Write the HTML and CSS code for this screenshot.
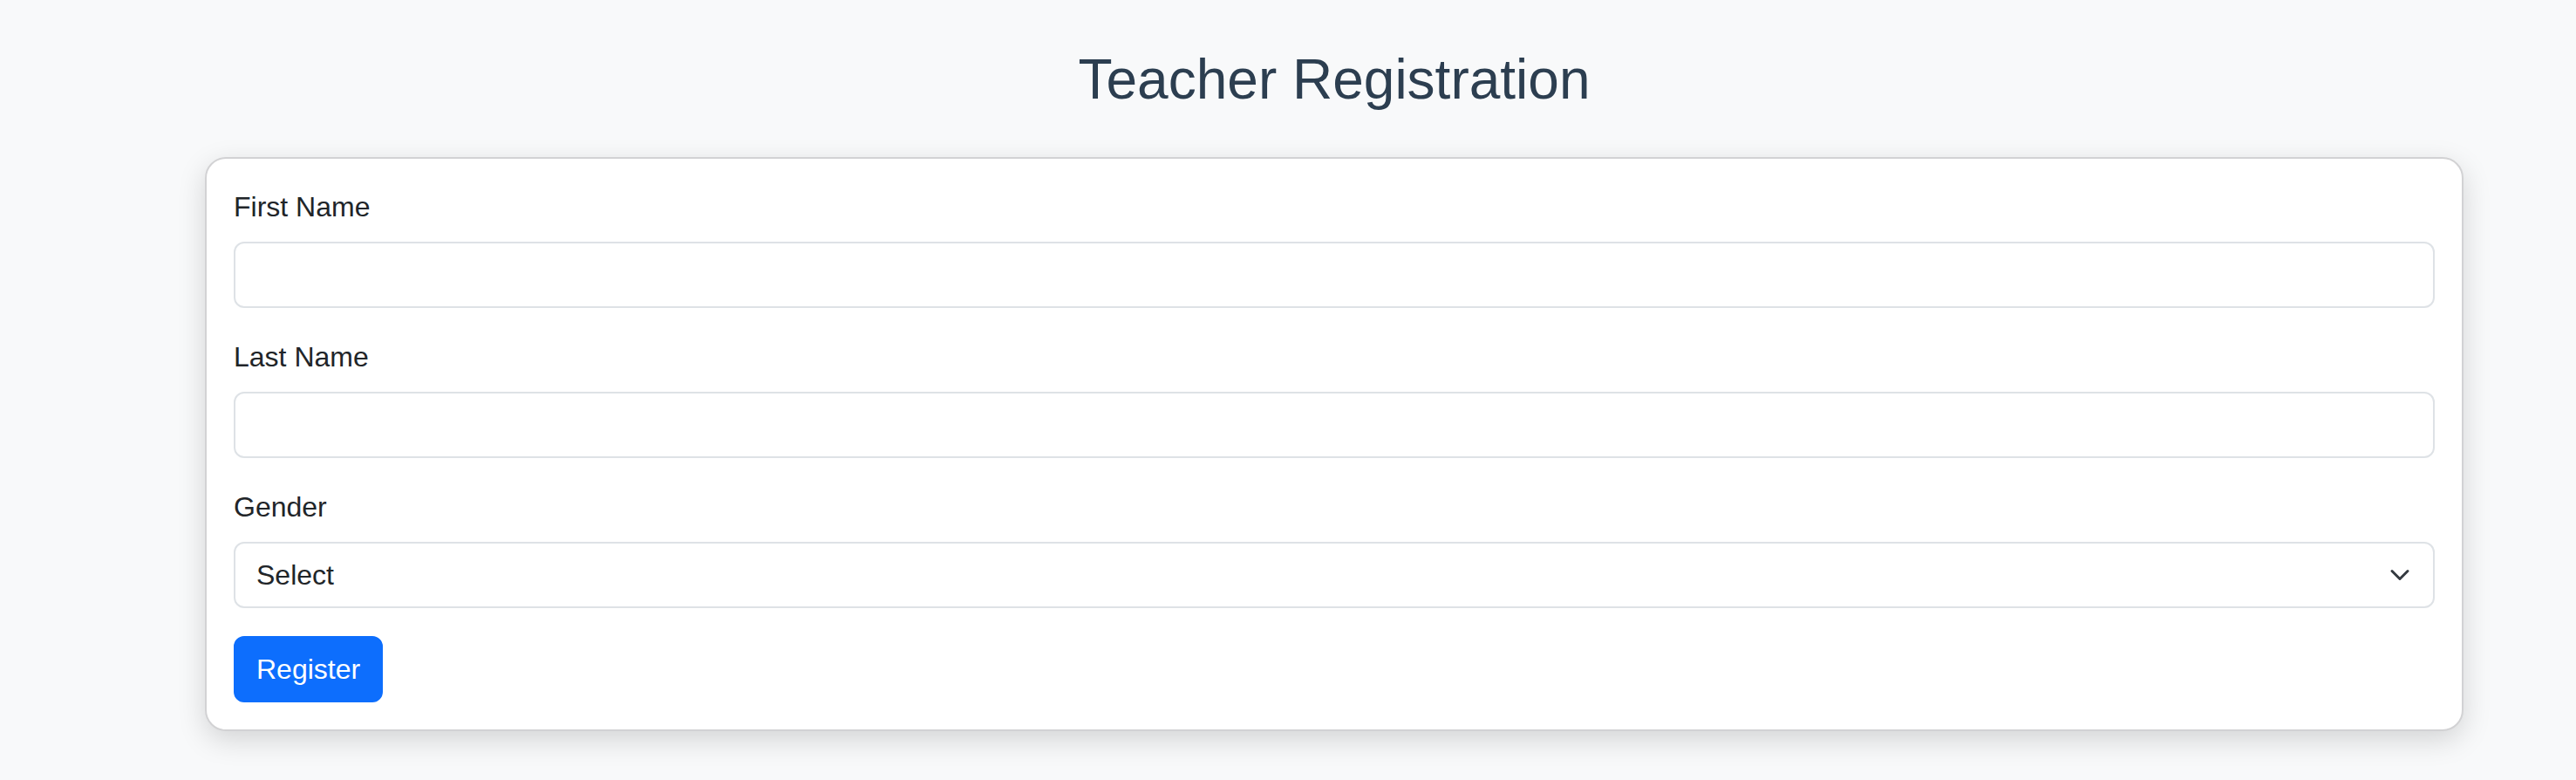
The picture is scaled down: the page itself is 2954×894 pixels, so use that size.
FILE: index.html
```html
<!DOCTYPE html>
<html lang="en">
<head>
<meta charset="utf-8">
<title>Teacher Registration</title>
<link rel="stylesheet" href="styles.css">
</head>
<body>
<div class="page">
  <h1 class="title">Teacher Registration</h1>
  <form class="card">
    <div class="field">
      <label class="label" for="first">First Name</label>
      <input class="control" id="first" type="text">
    </div>
    <div class="field">
      <label class="label" for="last">Last Name</label>
      <input class="control" id="last" type="text">
    </div>
    <div class="field">
      <label class="label" for="gender">Gender</label>
      <div class="select-wrap">
        <select class="control select" id="gender">
          <option>Select</option>
          <option>Male</option>
          <option>Female</option>
        </select>
        <svg class="chevron" viewBox="0 0 16 16" width="24" height="24" aria-hidden="true"><path d="m2 5 6 6 6-6" fill="none" stroke="#343a40" stroke-width="2" stroke-linecap="round" stroke-linejoin="round"/></svg>
      </div>
    </div>
    <div class="actions">
      <button class="btn" type="button">Register</button>
    </div>
  </form>
</div>
</body>
</html>
```

FILE: styles.css
```css
* { box-sizing: border-box; }
html, body { margin: 0; padding: 0; }
body {
  background: #f8f9fa;
  font-family: "Liberation Sans", Arial, Helvetica, sans-serif;
  color: #212529;
  width: 2954px;
  height: 894px;
  overflow: hidden;
}
.page {
  display: flex;
  flex-direction: column;
  align-items: center;
  padding: 53px 129px 0 235px;
}
.title {
  margin: 0 0 50px 0;
  font-size: 64px;
  line-height: 1.2;
  font-weight: 400;
  color: #2c3e50;
}
.card {
  width: 100%;
  background: #fff;
  border: 2px solid #d2d2d4;
  border-radius: 24px;
  padding: 31px 31px 31px 31px;
  box-shadow: 0 10px 32px rgba(0, 0, 0, 0.15);
  display: flex;
  flex-direction: column;
  gap: 32px;
}
.field { display: flex; flex-direction: column; }
.label {
  font-size: 32px;
  line-height: 48px;
  margin-bottom: 16px;
  color: #212529;
}
.control {
  display: block;
  width: 100%;
  height: 76px;
  margin: 0;
  padding: 12px 24px;
  font-family: inherit;
  font-size: 32px;
  line-height: 48px;
  color: #212529;
  background: #fff;
  border: 2px solid #dee2e6;
  border-radius: 12px;
  outline: none;
}
.select-wrap { position: relative; }
.select {
  -webkit-appearance: none;
  appearance: none;
  padding-right: 72px;
}
.chevron {
  position: absolute;
  right: 28px;
  top: 26px;
  pointer-events: none;
}
.actions { display: flex; }
.btn {
  font-family: inherit;
  font-size: 32px;
  line-height: 48px;
  padding: 12px 24px;
  height: 76px;
  color: #fff;
  background: #0d6efd;
  border: 2px solid #0d6efd;
  border-radius: 12px;
  cursor: pointer;
}
```
